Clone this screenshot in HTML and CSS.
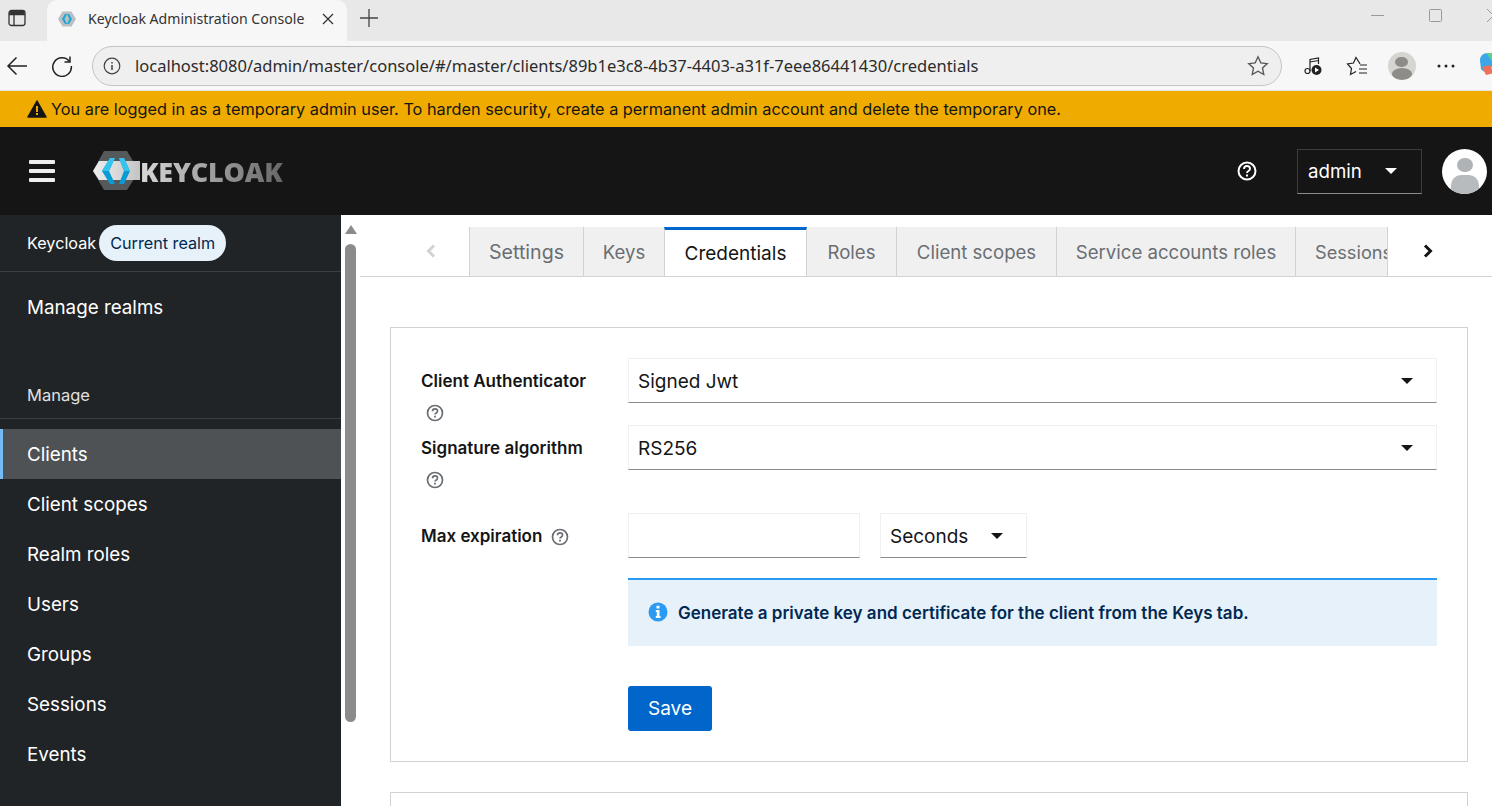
FILE: index.html
```html
<!DOCTYPE html>
<html lang="en">
<head>
    <meta charset="UTF-8">
    <title>Keycloak Administration Console</title>
    <link rel="stylesheet" href="styles.css">
</head>
<body>
    <div class="tabstrip">
        <svg class="ic-panel" width="18" height="18" viewBox="0 0 18 18" fill="none" stroke="#333" stroke-width="1.3"><rect x="1" y="1.5" width="16" height="15" rx="2.5"/><path d="M1 5.5h16M6 5.5v11"/><path d="M1.5 2h15v3.5h-15z" fill="#333" stroke="none"/></svg>
        <div class="browser-tab">
            <svg width="20" height="20" viewBox="0 0 20 20"><path d="M5.5 2.500h9L19 10l-4.500 7.500h-9L1 10z" fill="#b9bfc2"/><path d="M8 5l-3 5 3 5h2L7.500 10 10 5zM12 5l3 5-3 5h-2l2.500-5L10 5z" fill="#1aa6d8"/></svg>
            <span class="browser-tab-title">Keycloak Administration Console</span>
            <svg width="12" height="12" viewBox="0 0 12 12" stroke="#333" stroke-width="1.300"><path d="M1 1l10 10M11 1L1 11"/></svg>
        </div>
        <svg class="ic-plus" width="18" height="18" viewBox="0 0 18 18" stroke="#444" stroke-width="1.300"><path d="M9 0v18M0 9h18"/></svg>
        <div class="window-btns">
            <svg width="13" height="13" viewBox="0 0 13 13" stroke="#999"><path d="M0 6.500h13"/></svg>
            <svg width="13" height="13" viewBox="0 0 13 13" fill="none" stroke="#999"><rect x=".5" y=".5" width="12" height="12" rx="1"/></svg>
            <svg width="13" height="13" viewBox="0 0 13 13" stroke="#999"><path d="M0 0l13 13M13 0L0 13"/></svg>
        </div>
    </div>

    <div class="toolbar">
        <svg class="ic-back" width="22" height="20" viewBox="0 0 22 20" fill="none" stroke="#222" stroke-width="1.500"><path d="M21 10H2M10.500 1.500L2 10l8.500 8.500"/></svg>
        <svg class="ic-reload" width="22" height="22" viewBox="0 0 22 22" fill="none" stroke="#222" stroke-width="1.500"><path d="M18.500 6.500A9.300 9.300 0 1 0 20.300 11"/><path d="M19 1.500v5.500h-5.500"/></svg>
        <div class="urlbar">
            <svg width="18" height="18" viewBox="0 0 18 18" fill="none" stroke="#444" stroke-width="1.200"><circle cx="9" cy="9" r="7.800"/><path d="M9 8v5M9 5v1.500" stroke-width="1.500"/></svg>
            <span class="url">localhost:8080/admin/master/console/#/master/clients/89b1e3c8-4b37-4403-a31f-7eee86441430/credentials</span>
            <svg class="ic-star" width="22" height="22" viewBox="0 0 22 22" fill="none" stroke="#555" stroke-width="1.300"><path d="M11 1.800l2.800 6 6.500.8-4.800 4.400 1.300 6.500-5.800-3.300-5.800 3.300 1.300-6.500L1.700 8.600l6.500-.8z"/></svg>
        </div>
        <div class="toolbar-icons">
            <svg width="18" height="20" viewBox="0 0 18 20" fill="none" stroke="#222" stroke-width="1.200"><circle cx="3.500" cy="15" r="2.500"/><path d="M6 15V3.500L14.500 2v6M6 6l8.500-1.500"/><circle cx="12.500" cy="14" r="5" fill="#222" stroke="none"/><path d="M11 11.500l4 2.500-4 2.500z" fill="#fff" stroke="none"/></svg>
            <svg width="22" height="20" viewBox="0 0 22 20" fill="none" stroke="#222" stroke-width="1.200"><path d="M14 8l-.5-1L10 1.500 7.500 7 1.500 8 5.500 12.500 4.500 18.500 10 15.500"/><path d="M14 9h7M13 13h8M13 17h8"/></svg>
            <div class="profile"><span class="profile-head"></span><span class="profile-body"></span></div>
            <svg width="18" height="4" viewBox="0 0 18 4" fill="#222"><circle cx="2" cy="2" r="1.500"/><circle cx="9" cy="2" r="1.500"/><circle cx="16" cy="2" r="1.500"/></svg>
            <svg class="ic-copilot" width="24" height="26" viewBox="0 0 24 26"><path d="M2 8Q2 0 10 0h14v14H10Q8 22 3 16z" fill="#3ba7e8"/><path d="M8 0h16v8H14z" fill="#5fd08a"/><path d="M4 14l8-2 4 8-8 2z" fill="#f0705a"/></svg>
        </div>
    </div>

    <div class="banner">
        <svg width="20" height="18" viewBox="0 0 20 18"><path d="M10 1l9 16H1z" fill="#151515" stroke="#151515" stroke-linejoin="round" stroke-width="1.500"/><path d="M9 6h2v6H9zM9 13h2v2H9z" fill="#f0ab00"/></svg>
        <span>You are logged in as a temporary admin user. To harden security, create a permanent admin account and delete the temporary one.</span>
    </div>

    <header class="masthead">
        <div class="hamburger"><span></span><span></span><span></span></div>
        <div class="logo">
            <svg width="50" height="40" viewBox="0 0 50 40">
                <defs>
                    <linearGradient id="logoBand" x1="0" x2="1" y1="0" y2="0"><stop offset="0" stop-color="#eee"/><stop offset="1" stop-color="#c4c4c4"/></linearGradient>
                </defs>
                <path d="M11 0h23l12 20-12 19H11L0 20z" fill="#56595c"/>
                <path d="M0 20l6-10h41v19H6z" fill="url(#logoBand)"/>
                <path d="M17 7h5l-6 13 6 13h-5L9 20z" fill="#0a9bd4"/>
                <path d="M17 7h5l-6 13H9z" fill="#36c3ef"/>
                <path d="M26 7h5l6 13-6 13h-5l5-13z" fill="#0a9bd4"/>
                <path d="M26 7h5l6 13h-6z" fill="#36c3ef"/>
            </svg>
            <span class="logo-text">KEYCLOAK</span>
        </div>
        <svg class="ic-help-top" width="20" height="20" viewBox="0 0 20 20" fill="none" stroke="#fff" stroke-width="2"><circle cx="10" cy="10" r="8.500"/><path d="M7 8q0-3 3-3t3 2.700q0 1.500-1.500 2.300T10 12" stroke-width="1.900"/><path d="M9 13.500h2v2H9z" fill="#fff" stroke="none"/></svg>
        <div class="user-menu"><span>admin</span><i class="caret caret-white"></i></div>
        <div class="user-avatar"><span class="avatar-head"></span><span class="avatar-body"></span></div>
    </header>

    <div class="page">
        <nav class="sidebar">
            <div class="realm">Keycloak <span class="pill">Current realm</span></div>
            <a class="nav-item manage-realms">Manage realms</a>
            <div class="nav-title">Manage</div>
            <a class="nav-item active">Clients</a>
            <a class="nav-item">Client scopes</a>
            <a class="nav-item">Realm roles</a>
            <a class="nav-item">Users</a>
            <a class="nav-item">Groups</a>
            <a class="nav-item">Sessions</a>
            <a class="nav-item">Events</a>
        </nav>

        <div class="scrollbar">
            <i class="scroll-up"></i>
            <div class="scroll-thumb"></div>
        </div>

        <main class="content">
            <div class="tabs">
                <div class="tab-arrow arrow-left">
                    <svg width="10" height="14" viewBox="0 0 10 14" fill="none" stroke="#d2d2d2" stroke-width="3"><path d="M8 1.500L2.500 7 8 12.500"/></svg>
                </div>
                <div class="tab tab-settings">Settings</div>
                <div class="tab tab-keys">Keys</div>
                <div class="tab tab-current">Credentials</div>
                <div class="tab tab-roles">Roles</div>
                <div class="tab tab-scopes">Client scopes</div>
                <div class="tab tab-service">Service accounts roles</div>
                <div class="tab tab-cut">Sessions</div>
                <div class="tab-arrow arrow-right">
                    <svg width="10" height="14" viewBox="0 0 10 14" fill="none" stroke="#151515" stroke-width="3"><path d="M2 1.500L7.500 7 2 12.500"/></svg>
                </div>
            </div>

            <section class="card">
                <div class="form-row row-auth">
                    <div class="form-label">
                        <span>Client Authenticator</span>
                        <svg class="ic-help" width="18" height="18" viewBox="0 0 18 18" fill="none" stroke="#6a6e73" stroke-width="1.700"><circle cx="9" cy="9" r="7.500"/><path d="M6.500 7.300q0-2.500 2.500-2.500t2.500 2.200q0 1.200-1.200 1.900T9 10.500"/><path d="M8.100 11.800h1.800v1.800H8.100z" fill="#6a6e73" stroke="none"/></svg>
                    </div>
                    <div class="select"><span>Signed Jwt</span><i class="caret"></i></div>
                </div>
                <div class="form-row row-alg">
                    <div class="form-label">
                        <span>Signature algorithm</span>
                        <svg class="ic-help" width="18" height="18" viewBox="0 0 18 18" fill="none" stroke="#6a6e73" stroke-width="1.700"><circle cx="9" cy="9" r="7.500"/><path d="M6.500 7.300q0-2.500 2.500-2.500t2.500 2.200q0 1.200-1.200 1.900T9 10.500"/><path d="M8.100 11.800h1.800v1.800H8.100z" fill="#6a6e73" stroke="none"/></svg>
                    </div>
                    <div class="select"><span>RS256</span><i class="caret"></i></div>
                </div>
                <div class="form-row row-exp">
                    <div class="form-label label-inline">
                        <span>Max expiration</span>
                        <svg class="ic-help" width="18" height="18" viewBox="0 0 18 18" fill="none" stroke="#6a6e73" stroke-width="1.700"><circle cx="9" cy="9" r="7.500"/><path d="M6.500 7.300q0-2.500 2.500-2.500t2.500 2.200q0 1.200-1.200 1.900T9 10.500"/><path d="M8.100 11.800h1.800v1.800H8.100z" fill="#6a6e73" stroke="none"/></svg>
                    </div>
                    <div class="exp-controls">
                        <div class="text-input"></div>
                        <div class="select select-unit"><span>Seconds</span><i class="caret"></i></div>
                    </div>
                </div>
                <div class="form-row">
                    <div class="form-label"></div>
                    <div class="alert">
                        <svg width="20" height="20" viewBox="0 0 20 20"><circle cx="10" cy="10" r="9.500" fill="#2b9af3"/><path d="M8.500 3.800h3v2.700h-3zM7.800 8h3.700v6h1v2H7.800v-2h1v-4h-1z" fill="#fff"/></svg>
                        <span>Generate a private key and certificate for the client from the Keys tab.</span>
                    </div>
                </div>
                <div class="form-row row-save">
                    <div class="form-label"></div>
                    <button class="btn-save">Save</button>
                </div>
            </section>

            <section class="card card-next"></section>
        </main>
    </div>
</body>
</html>
```

FILE: styles.css
```css
* {
    box-sizing: border-box;
}

html, body {
    height: 806px;
    overflow: hidden;
}

body {
    margin: 0;
    font-family: Inter, "Liberation Sans", sans-serif;
    background-color: #fff;
    color: #151515;
}

/* browser chrome */
.tabstrip {
    height: 41px;
    background-color: #e8e8e8;
    display: flex;
    align-items: flex-end;
    overflow: hidden;
}

.ic-panel {
    margin: 0 21px 14px 8px;
}

.browser-tab {
    width: 300px;
    height: 41px;
    background-color: #f7f7f7;
    border-radius: 10px 10px 0 0;
    display: flex;
    align-items: center;
    padding: 0 13px 4px 10px;
}

.browser-tab-title {
    flex: 1;
    margin-left: 11px;
    font-family: "Noto Sans", sans-serif;
    font-size: 14.1px;
    color: #333;
}

.ic-plus {
    margin: 0 0 14px 13px;
}

.window-btns {
    margin-left: auto;
    display: flex;
    gap: 45px;
    margin-bottom: 19px;
    margin-right: -8px;
}

.toolbar {
    height: 50px;
    background-color: #f7f7f7;
    display: flex;
    align-items: center;
    border-bottom: 1px solid #e4e4e4;
    overflow: hidden;
}

.toolbar svg {
    flex-shrink: 0;
}

.ic-back {
    margin-left: 6px;
}

.ic-reload {
    margin-left: 23px;
}

.urlbar {
    width: 1190px;
    flex-shrink: 0;
    height: 40px;
    margin-left: 19px;
    background-color: #efefef;
    border: 1px solid #c4c4c4;
    border-radius: 20px;
    display: flex;
    align-items: center;
    padding: 0 12px 0 10px;
}

.url {
    flex: 1;
    margin-left: 14px;
    font-family: "Noto Sans", sans-serif;
    font-size: 16.5px;
    color: #2b2b2b;
    white-space: nowrap;
}

.toolbar-icons {
    display: grid;
    grid-template-columns: repeat(5, 44.25px);
    justify-items: center;
    align-items: center;
    margin-left: 9px;
    flex-shrink: 0;
}

.profile {
    width: 28px;
    height: 28px;
    border-radius: 50%;
    background-color: #d6d5d2;
    display: flex;
    flex-direction: column;
    align-items: center;
    overflow: hidden;
}

.profile-head {
    width: 13px;
    height: 13px;
    margin-top: 5px;
    border-radius: 50%;
    background-color: #8f8c87;
}

.profile-body {
    width: 20px;
    height: 14px;
    margin-top: 1px;
    border-radius: 50%;
    background-color: #8f8c87;
}

/* banner */
.banner {
    height: 36px;
    background-color: #f0ab00;
    display: flex;
    align-items: center;
    gap: 4px;
    padding-left: 27px;
    font-size: 16.3px;
    white-space: nowrap;
}

/* masthead */
.masthead {
    height: 88px;
    background-color: #151515;
    display: flex;
    align-items: center;
    color: #fff;
}

.hamburger {
    width: 26px;
    margin-left: 29px;
    display: flex;
    flex-direction: column;
    gap: 5px;
}

.hamburger span {
    height: 4px;
    background-color: #eee;
    border-radius: 1px;
}

.logo {
    display: flex;
    align-items: center;
    margin-left: 38px;
}

.logo-text {
    font-family: "Open Sans", sans-serif;
    font-weight: 800;
    font-size: 27px;
    margin-left: -3px;
    letter-spacing: -0.2px;
    background: linear-gradient(90deg, #d8d8d8, #666);
    -webkit-background-clip: text;
    background-clip: text;
    color: transparent;
}

.ic-help-top {
    margin-left: auto;
}

.user-menu {
    width: 125px;
    height: 45px;
    margin-left: 40px;
    border: 1px solid #3c3f42;
    border-bottom-color: #8a8d90;
    display: flex;
    align-items: center;
    justify-content: space-between;
    padding: 0 24px 0 10px;
    font-size: 18.7px;
}

.user-avatar {
    width: 45px;
    height: 45px;
    margin: 0 5px 0 20px;
    border-radius: 50%;
    background-color: #fff;
    display: flex;
    flex-direction: column;
    align-items: center;
    overflow: hidden;
}

.avatar-head {
    width: 16px;
    height: 16px;
    margin-top: 9px;
    border-radius: 50%;
    background-color: #b0b3b6;
}

.avatar-body {
    width: 28px;
    height: 20px;
    margin-top: 3px;
    border-radius: 10px 10px 0 0;
    background-color: #b8bbbe;
}

.caret {
    width: 0;
    height: 0;
    border-left: 6px solid transparent;
    border-right: 6px solid transparent;
    border-top: 6px solid #151515;
}

.caret-white {
    border-top-color: #fff;
}

/* page */
.page {
    display: flex;
    height: 591px;
    overflow: hidden;
}

.sidebar {
    width: 341px;
    flex-shrink: 0;
    background-color: #212427;
    color: #fff;
}

.realm {
    height: 57px;
    border-bottom: 1px solid #3c3f42;
    display: flex;
    align-items: center;
    gap: 3px;
    padding: 0 0 1px 27px;
    font-size: 16.2px;
}

.pill {
    height: 36px;
    padding: 0 11px;
    background-color: #e7f1fa;
    border-radius: 18px;
    color: #002952;
    display: flex;
    align-items: center;
}

.nav-item {
    display: flex;
    align-items: center;
    height: 50px;
    padding-left: 27px;
    font-size: 18.8px;
}

.manage-realms {
    margin-top: 10px;
    margin-bottom: 28px;
}

.nav-title {
    height: 59px;
    margin-bottom: 10px;
    border-bottom: 1px solid #3c3f42;
    padding: 25px 0 0 27px;
    font-size: 16.5px;
    color: #e0e0e0;
}

.active {
    background-color: #4f5255;
    border-left: 3px solid #73bcf7;
    padding-left: 24px;
}

.scrollbar {
    width: 19px;
    flex-shrink: 0;
    background-color: #fff;
    padding: 10px 4px 0;
    display: flex;
    flex-direction: column;
    align-items: center;
}

.scroll-up {
    width: 0;
    height: 0;
    border-left: 6px solid transparent;
    border-right: 6px solid transparent;
    border-bottom: 9px solid #8b8b8b;
}

.scroll-thumb {
    width: 11px;
    height: 478px;
    margin-top: 10px;
    background-color: #8b8b8b;
    border-radius: 6px;
}

.content {
    flex: 1;
    min-width: 0;
    padding-top: 12px;
    overflow: hidden;
}

/* tabs */
.tabs {
    height: 50px;
    display: flex;
    border-bottom: 1px solid #d2d2d2;
    overflow: hidden;
}

.tab-arrow {
    display: flex;
    align-items: center;
    justify-content: center;
    padding-bottom: 2px;
}

.arrow-left {
    width: 109px;
    padding-left: 32px;
}

.arrow-right {
    width: 80px;
}

.tab {
    display: flex;
    align-items: center;
    justify-content: center;
    padding-top: 1px;
    background-color: #f0f0f0;
    border-left: 1px solid #d2d2d2;
    font-size: 18.6px;
    color: #6a6e73;
    white-space: nowrap;
}

.tab-settings {
    width: 114px;
    font-size: 19.6px;
}

.tab-keys {
    width: 81px;
}

.tab-current {
    width: 143px;
    height: 50px;
    padding: 0 0 1px;
    background-color: #fff;
    color: #151515;
    border-top: 3px solid #06c;
    border-left: 1px solid #d2d2d2;
    border-right: 1px solid #d2d2d2;
    font-size: 19px;
}

.tab-roles {
    width: 89px;
    border-left: none;
}

.tab-scopes {
    width: 160px;
}

.tab-service {
    width: 239px;
}

.tab-cut {
    width: 93px;
    overflow: hidden;
    justify-content: flex-start;
    padding-left: 19px;
    border-right: 1px solid #d2d2d2;
    font-size: 18.2px;
}

/* card */
.card {
    width: 1078px;
    margin: 50px 0 0 30px;
    height: 435px;
    border: 1px solid #d2d2d2;
    padding: 30px;
}

.card-next {
    margin-top: 30px;
    height: 60px;
}

.form-row {
    display: flex;
}

.row-auth {
    height: 67px;
}

.row-alg {
    height: 88px;
}

.row-exp {
    height: 65px;
}

.row-save {
    margin-top: 40px;
}

.form-label {
    width: 207px;
    flex-shrink: 0;
    padding-top: 13px;
    font-size: 17px;
    font-weight: 600;
}

.form-label span {
    display: block;
}

.ic-help {
    display: block;
    margin: 13px 0 0 5px;
}

.label-inline {
    display: flex;
    align-items: center;
    gap: 9px;
    height: 45px;
    padding-top: 1px;
}

.label-inline .ic-help {
    margin: 2px 0 0;
}

.select {
    flex: 1;
    height: 45px;
    border: 1px solid #f0f0f0;
    border-bottom-color: #8a8d90;
    display: flex;
    align-items: center;
    justify-content: space-between;
    padding: 1px 23px 0 9px;
    font-size: 19px;
}

.exp-controls {
    flex: 1;
    display: flex;
    gap: 20px;
}

.text-input {
    width: 232px;
    height: 45px;
    border: 1px solid #f0f0f0;
    border-bottom-color: #8a8d90;
}

.select-unit {
    flex: none;
    width: 147px;
    padding-right: 23px;
}

.alert {
    flex: 1;
    height: 68px;
    background-color: #e7f1fa;
    border-top: 2px solid #2b9af3;
    display: flex;
    align-items: center;
    gap: 10px;
    padding: 0 0 0 20px;
    font-size: 17px;
    font-weight: 600;
    color: #002952;
}

.alert svg {
    margin-top: -2px;
}

.btn-save {
    width: 84px;
    height: 45px;
    background-color: #06c;
    color: #fff;
    border: none;
    border-radius: 3px;
    font-family: inherit;
    font-size: 19px;
}
```
